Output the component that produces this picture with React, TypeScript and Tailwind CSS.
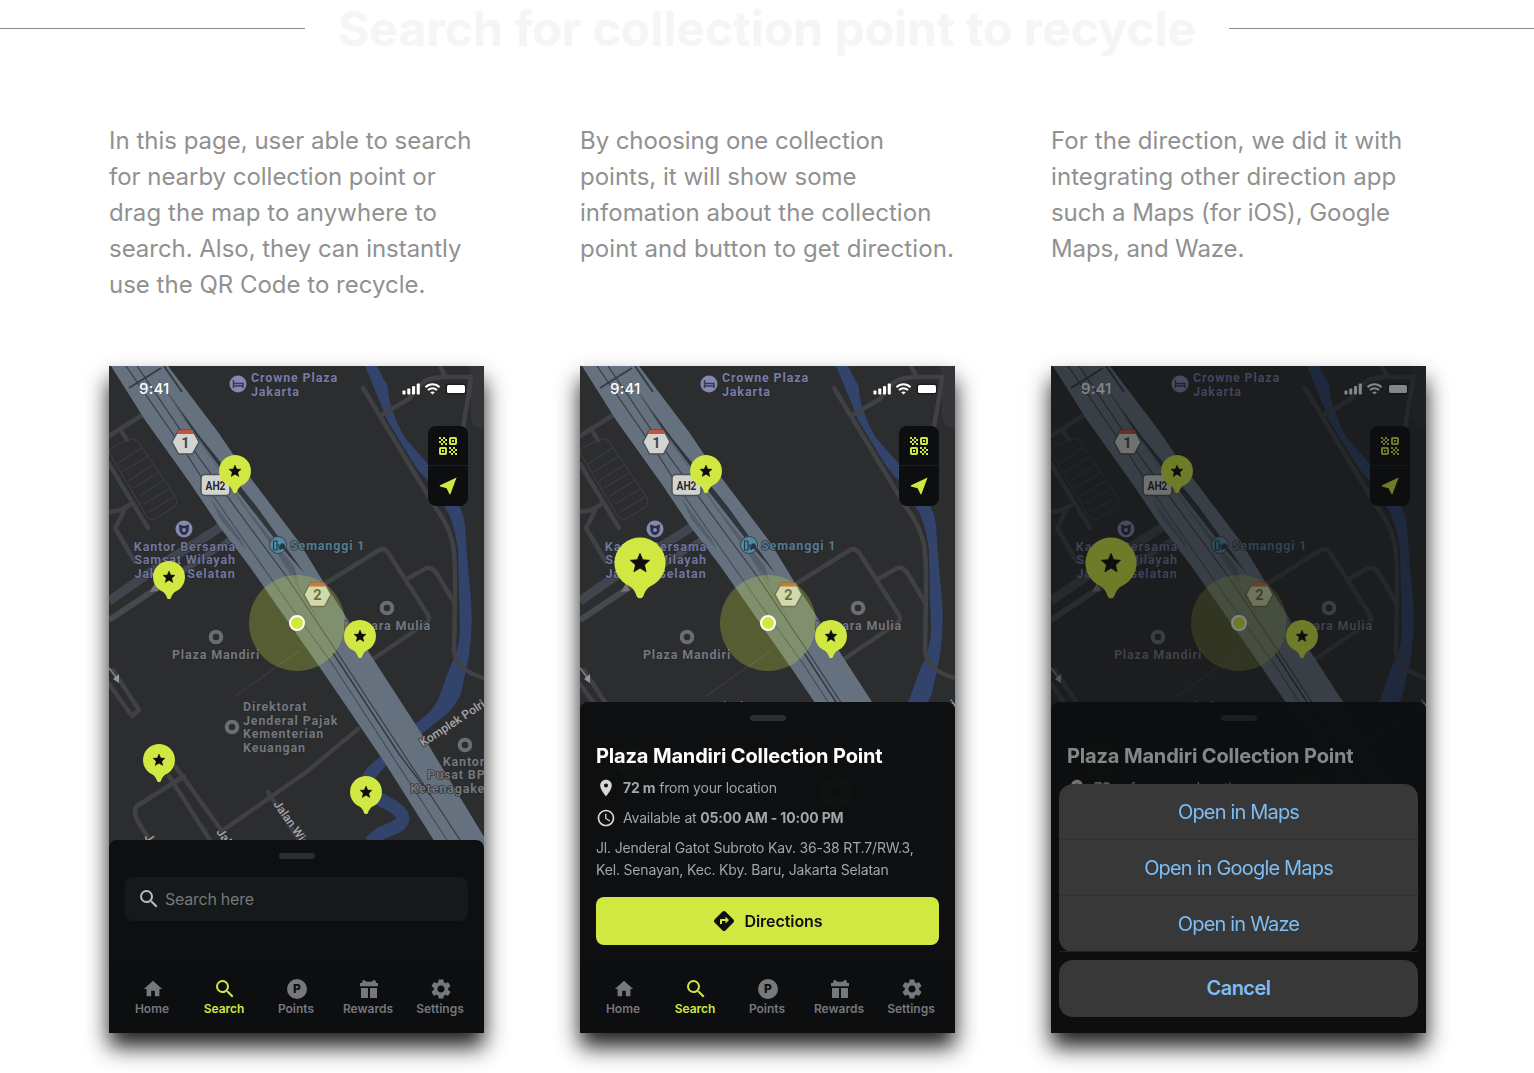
import React from "react";
import { MdHome, MdSearch, MdSettings, MdLocationOn, MdAccessTime, MdDirections } from "react-icons/md";

const STAR = "M0 -6 L1.7 -2 L6 -1.7 L2.8 1.2 L3.8 5.5 L0 3.2 L-3.8 5.5 L-2.8 1.2 L-6 -1.7 L-1.7 -2 Z";

function Pin({ x, y, scale = 1 }: { x: number; y: number; scale?: number }) {
  return (
    <g transform={`translate(${x} ${y}) scale(${scale})`}>
      <path
        d="M0 -16 A16 16 0 0 1 6.5 14.6 C4.6 15.6 3 18 2.1 20.6 C1.5 22.6 -1.5 22.6 -2.1 20.6 C-3 18 -4.6 15.6 -6.5 14.6 A16 16 0 0 1 0 -16 Z"
        fill="#d1e842"
      />
      <path d={STAR} fill="#0c0e10" stroke="#0c0e10" strokeWidth="0.5" strokeLinejoin="round" />
    </g>
  );
}

function Label({ x, y, lines, fill, anchor = "start" }: { x: number; y: number; lines: string[]; fill: string; anchor?: "start" | "middle" }) {
  return (
    <text x={x} y={y} fill={fill} textAnchor={anchor} fontSize="12.5" fontWeight="700" letterSpacing="0.85" stroke="#232529" strokeWidth="1.2" paintOrder="stroke">
      {lines.map((line, i) => (
        <tspan key={line} x={x} y={y + i * 13.4}>
          {line}
        </tspan>
      ))}
    </text>
  );
}

function Poi({ x, y }: { x: number; y: number }) {
  return <circle cx={x} cy={y} r="5.3" fill="#2c2d30" stroke="#6b6d73" strokeWidth="4" />;
}

function Shield({ x, y, text }: { x: number; y: number; text: string }) {
  return (
    <g transform={`translate(${x} ${y})`}>
      <path d="M-7 -12 H7 L13.500 0 L7 12 H-7 L-13.500 0 Z" fill="#d3d4cf" stroke="#4b4f55" strokeWidth="1.4" strokeLinejoin="round" />
      <path d="M-6.6 -12 H6.6 L8.8 -8 H-8.8 Z" fill="#c0553f" />
      <text y="5.500" fontSize="14.500" fontWeight="700" textAnchor="middle" fill="#45474b">
        {text}
      </text>
    </g>
  );
}

function CityMap({ selected }: { selected: boolean }) {
  return (
    <svg className="absolute inset-0" width="375" height="600" viewBox="0 0 375 600" fill="none" fontFamily="Roboto, sans-serif">
      <rect width="375" height="600" fill="#2c2d2f" />
      <path d="M361 0 H375 V62 Q362 63 362 48 Z" fill="#34353a" />

      {/* canal */}
      <path
        d="M256 0 L268 0 L275 14 Q279 18 279 24 Q280 36 284 46 Q288 58 296 72 L319 98 L345 132 Q355 145 356 160 L358 190 L362 235 Q364 262 360 290 L352 327 Q349 336 339 347 L310 370 L290 385 L266 412 L253 410 Q258 400 270 392 L303 360 Q322 348 329 334 L341 301 Q350 285 351 265 L349 185 Q347 165 340 148 L332 135 L319 115 Q308 104 300 90 L283 62 Q276 52 272 38 L266 24 Z"
        fill="#33446c"
      />
      <path d="M268 432 C285 440 294 446 294 453 C292 464 270 463 262 476" stroke="#33446c" strokeWidth="13" />

      {/* minor streets */}
      <g stroke="#404145" strokeWidth="4.5" strokeLinejoin="round" strokeLinecap="round">
        <path d="M254 22 L326 141 C348 170 346 188 346 230 L345 284 Q346 304 375 312" />
        <path d="M274 48 L300 33 C312 14 318 11 340 11 H362 C360 30 357 42 354 62" />
        <path d="M331 0 L336 10" />
        <path d="M214 219 L270 184 Q276 181 280 188 L319 249 Q322 254 316 258 L261 295" />
        <path d="M298 213 L314 204 Q322 198 328 208 L346 238" />
        <path d="M0 70 L38 46 M13 66 L18 74" />
        <path d="M0 98 L39 162 M0 146 L12 144 L22 138 M16 142 Q12 152 6 162 L26 196" />
        <path d="M0 318 L23 350 L30 344 L4 304" />
        <path d="M60 410 L108 485 M66 400 L113 465 L196 407 L249 363" />
        <path d="M75 410 L28 440 Q24 445 28 454 L44 480" />
        <path d="M159 426 L190 474" />
      </g>
      <g stroke="#3b3c41" strokeWidth="1.2">
        <path d="M2 90 Q-2 84 4 81 L20 73 Q26 72 30 77 L66 130 Q70 138 64 142 L46 153 Q41 155 37 149 Z" />
        <path d="M8 98 L32 82 M13 106 L38 91 M19 115 L44 99 M24 122 L49 107 M30 130 L54 115 M35 138 L60 123 M40 146 L65 131" />
        <path d="M125 331 L190 285" />
      </g>
      <path d="M0 235 L50 200 L115 159" stroke="#41464e" strokeWidth="9" />
      <path d="M0 254 L60 214 L121 174" stroke="#444950" strokeWidth="6" />
      <path d="M41 226 L46 217 L50 225 Z" fill="#70747a" />
      <path d="M0 302 L9 314" stroke="#7c7f84" strokeWidth="1.6" />
      <path d="M10 317 L4 313 L10 308 Z" fill="#94979b" />

      {/* toll highway */}
      <path
        d="M2 0 L59 0 L109 66 L128 94 L190 176 L212 212 L261 288 L314 370 L383 484 H331 L274 394 L214 306 L141 201 L110 160 L81 117 L36 54 Z"
        fill="#65717e"
      />
      <path d="M17 0 L77 87 L103 128 M28 0 L91 93 L140 160 L177 210 L224 280 L351 474" stroke="#373d45" strokeWidth="1.2" />
      <path d="M103 128 L123 157 L177 234 L224 299 L338 474" stroke="#454c55" strokeWidth="1.2" />
      <path d="M50 14 L84 66 L120 118 L168 186 L207 250" stroke="#525c67" strokeWidth="1" />
      <path d="M55 20 L70 42 L92 72 L148 141 L196 208 L172 181 L126 122 L82 62 Z" fill="#30353c" />
      <path d="M20 22 L52 2 M55 0 L73 26" stroke="#363c43" strokeWidth="2" />
      <path d="M101 132 L131 172 L137 184 L112 154 Z M128 131 L185 200 L190 218 Z" fill="#535e6a" />
      <path d="M224 287 L290 388 L321 429" stroke="#303840" strokeWidth="1.4" />

      {/* place labels */}
      <g>
        <circle cx="129" cy="18" r="8.5" fill="#8588b0" />
        <path d="M124.5 14 V22 M124.5 20 H134 V17.5 H124.5 M134 17 V22" stroke="#37395a" strokeWidth="1.5" />
        <Label x={142} y={16.2} lines={["Crowne Plaza", "Jakarta"]} fill="#787da6" />
        <circle cx="75" cy="163" r="8.5" fill="#8588b0" />
        <path d="M70 158.500 L75 160 L80 158.500 L79.5 165 Q78 169 75 169 Q72 169 70.5 165 Z" fill="#2c2e48" />
        <circle cx="75" cy="164" r="2" fill="#8588b0" />
        <Label x={76} y={185} lines={["Kantor Bersama", "Samsat Wilayah", "Jakarta Selatan"]} fill="#71769c" anchor="middle" />
        <circle cx="169" cy="179" r="8.5" fill="#528aa0" stroke="#36424d" strokeWidth="1" />
        <path d="M164.5 184 V175 H168 V184 Z M168 179 H170 V183" stroke="#22384a" strokeWidth="1.1" />
        <path d="M170.5 184 V180.500 L172 177.500 H175 L176.300 180.500 V184 H174.800 V183 H172 V184 Z" fill="#22384a" />
        <Label x={181} y={184} lines={["Semanggi 1"]} fill="#547b91" />
        <Poi x={278} y={242} />
        <Label x={278.500} y={264} lines={["Menara Mulia"]} fill="#74777e" anchor="middle" />
        <Poi x={107} y={271} />
        <Label x={107} y={293} lines={["Plaza Mandiri"]} fill="#74777e" anchor="middle" />
        <Poi x={123} y={361} />
        <Label x={134} y={345.3} lines={["Direktorat", "Jenderal Pajak", "Kementerian", "Keuangan"]} fill="#74777e" />
        <Poi x={356} y={379} />
        <Label x={355} y={399.700} lines={["Kantor", "Pusat BPJS", "Ketenagakerjaan"]} fill="#74777e" anchor="middle" />
      </g>
      <g fill="#a4a6aa" fontSize="12" fontWeight="500" stroke="#2c2d30" strokeWidth="1.5" paintOrder="stroke">
        <text transform="translate(314 381) rotate(-33)">Komplek Polri</text>
        <text transform="translate(164 438) rotate(55)">Jalan Widya</text>
        <text transform="translate(107 466) rotate(55)">Jalan</text>
        <text transform="translate(35 471) rotate(55)">Jalan</text>
      </g>

      <Shield x={76.500} y={76} text="1" />
      <g transform="translate(106 119)">
        <rect x="-14" y="-10.5" width="29" height="21" rx="4" fill="#d3d4cf" stroke="#4b4f55" strokeWidth="1.5" />
        <text x="0.5" y="4.700" textAnchor="middle" fontSize="13.500" fontWeight="700" textLength="20" lengthAdjust="spacingAndGlyphs" fill="#25272a">
          AH2
        </text>
      </g>
      <Shield x={208.500} y={228.500} text="2" />

      {/* user position */}
      <circle cx="188" cy="257" r="48" fill="#d1e842" fillOpacity="0.26" />
      <circle cx="188" cy="257" r="7" fill="#d1e842" stroke="#fff" strokeWidth="2" />

      <Pin x={126} y={105} />
      {selected ? <Pin x={60} y={197} scale={1.6} /> : <Pin x={60} y={211} />}
      <Pin x={251} y={270} />
      <Pin x={50} y={394} />
      <Pin x={257} y={426} />
    </svg>
  );
}

function StatusBar() {
  return (
    <div className="relative flex h-[46px] items-center justify-between pr-[18px] pl-[30px] text-white">
      <span className="text-[15px] leading-5 font-medium tracking-[0.2px]">9:41</span>
      <svg width="64" height="14" viewBox="0 0 64 14" fill="#fff">
        <rect x="0.500" y="8.500" width="3" height="4" rx="0.8" />
        <rect x="5.300" y="6.500" width="3" height="6" rx="0.8" />
        <rect x="10" y="4" width="3" height="8.500" rx="0.8" />
        <rect x="14.800" y="1.500" width="3" height="11" rx="0.8" />
        <g fill="none" stroke="#fff" strokeWidth="2">
          <path d="M23.500 5.200 C27.500 1.200 33.500 1.200 37.500 5.200" />
          <path d="M26 8.100 C28.500 5.700 32.500 5.700 35 8.100" />
        </g>
        <path d="M28.200 10.300 Q30.500 8.500 32.800 10.300 L30.500 12.600 Z" />
        <rect x="43.500" y="1.500" width="20.500" height="11" rx="3" fill="#1b1c1f" />
        <rect x="45" y="3" width="18" height="8" rx="1.600" />
      </svg>
    </div>
  );
}

function QrIcon() {
  const cells = [
    [0, 0], [2, 0], [1, 1], [3, 1], [0, 2], [2, 2], [1, 3], [3, 3],
  ];
  return (
    <svg width="18" height="18" viewBox="0 0 18 18" fill="#d1e842">
      {cells.map(([x, y]) => (
        <React.Fragment key={`${x}-${y}`}>
          <rect x={x * 2} y={y * 2} width="2" height="2" />
          <rect x={10 + x * 2} y={10 + y * 2} width="2" height="2" />
        </React.Fragment>
      ))}
      <rect x="11" y="1" width="6" height="6" rx="0.700" fill="none" stroke="#d1e842" strokeWidth="2" />
      <rect x="13" y="3" width="2" height="2" />
      <rect x="1" y="11" width="6" height="6" rx="0.700" fill="none" stroke="#d1e842" strokeWidth="2" />
      <rect x="3" y="13" width="2" height="2" />
    </svg>
  );
}

function MapTools() {
  return (
    <div className="absolute top-[60px] right-4 flex h-20 w-10 flex-col divide-y divide-[#1d2021] rounded-lg bg-[#0c0e10]">
      <button className="flex h-10 items-center justify-center" aria-label="Scan code">
        <QrIcon />
      </button>
      <button className="flex h-10 items-center justify-center" aria-label="Locate me">
        <svg width="18" height="18" viewBox="0 0 18 18">
          <path d="M17.600 0.600 L11.500 17 Q11 17.900 10.400 17 L7.600 11.200 L1.100 9.400 Q0.200 8.900 1.100 8.300 Z" fill="#d1e842" />
        </svg>
      </button>
    </div>
  );
}

function PointsIcon() {
  return (
    <span className="flex size-5 items-center justify-center rounded-full bg-current">
      <span className="text-xs leading-none font-extrabold text-[#0c0e10]">P</span>
    </span>
  );
}

function GiftIcon() {
  return (
    <svg width="18" height="18" viewBox="0 0 18 18" fill="currentColor">
      <path d="M0 3 H2 L2.600 0.600 Q3.200 -0.500 4.500 0.300 L6.500 1.700 H11.500 L13.500 0.300 Q14.800 -0.500 15.400 0.600 L16 3 H18 V6.300 H0 Z" />
      <path d="M1 8 H8 V18 H1 Z M10 8 H17 V18 H10 Z" />
    </svg>
  );
}

const TABS = [
  { name: "Home", icon: <MdHome size={22} /> },
  { name: "Search", icon: <MdSearch size={24} /> },
  { name: "Points", icon: <PointsIcon /> },
  { name: "Rewards", icon: <GiftIcon /> },
  { name: "Settings", icon: <MdSettings size={24} /> },
];

function TabBar() {
  return (
    <nav className="flex h-[69px] bg-[#0c0e10] pt-[13px] pl-[7px]">
      {TABS.map((tab) => (
        <div key={tab.name} className={tab.name === "Search" ? "flex w-[72px] flex-col items-center text-[#d1e842]" : "flex w-[72px] flex-col items-center text-[#76787c]"}>
          <span className="flex h-6 items-center justify-center pl-[2px]">{tab.icon}</span>
          <span className="text-xs leading-4 font-semibold">{tab.name}</span>
        </div>
      ))}
    </nav>
  );
}

function Grabber() {
  return <div className="mx-auto h-[6px] w-9 shrink-0 rounded-full bg-[#2b2d2f]" />;
}

function SearchSheet() {
  return (
    <div className="flex h-[124px] flex-col rounded-t-lg bg-[#0c0e10]/98 px-4 pt-[13px] backdrop-blur-[2px]">
      <Grabber />
      <div className="mt-[18px] flex h-11 items-center rounded-lg bg-[#15191a] pl-3">
        <MdSearch size={24} color="#b9bbbd" />
        <span className="ml-1 text-base tracking-[-0.25px] text-[#75787c]">Search here</span>
      </div>
    </div>
  );
}

function DetailSheet({ compact }: { compact: boolean }) {
  return (
    <div className={compact ? "flex h-[331px] flex-col rounded-t-lg bg-[#0c0e10]/98 px-4 pt-[13px] text-sm tracking-[-0.17px] text-[#a3a5a8] backdrop-blur-[2px]" : "flex h-[262px] flex-col rounded-t-lg bg-[#0c0e10]/98 px-4 pt-[13px] text-sm tracking-[-0.17px] text-[#a3a5a8] backdrop-blur-[2px]"}>
      <Grabber />
      <h2 className="mt-[21px] text-xl leading-7 font-bold tracking-[-0.15px] text-white">Plaza Mandiri Collection Point</h2>
      <div className="mt-[8px] flex h-5 items-center">
        <MdLocationOn size={20} color="#d7d8d3" />
        <span className="ml-[7px]">
          <b className="font-bold">72 m</b> from your location
        </span>
      </div>
      {!compact && (
        <>
          <div className="mt-[10px] flex h-5 items-center">
            <MdAccessTime size={20} color="#d7d8d3" />
            <span className="ml-[7px]">
              Available at <b className="font-bold">05:00 AM - 10:00 PM</b>
            </span>
          </div>
          <p className="mt-[9px] leading-[22px]">
            Jl. Jenderal Gatot Subroto Kav. 36-38 RT.7/RW.3,
            <br />
            Kel. Senayan, Kec. Kby. Baru, Jakarta Selatan
          </p>
          <button className="mt-4 flex h-12 shrink-0 items-center justify-center gap-2 rounded-lg bg-[#d1e842] text-base font-semibold tracking-[-0.05px] text-[#0c0e10]">
            <MdDirections size={24} />
            Directions
          </button>
        </>
      )}
    </div>
  );
}

function ActionSheet() {
  return (
    <div className="absolute inset-0 flex flex-col justify-end bg-[#0c0d0f]/50 px-2 pb-4 text-xl text-[#7dbdf3]">
      <div className="flex flex-col overflow-hidden rounded-[14px] bg-[#383838] tracking-[-0.82px]">
        <button className="h-14 border-b border-[#2f3031]">Open in Maps</button>
        <button className="h-14 border-b border-[#2f3031]">Open in Google Maps</button>
        <button className="h-14">Open in Waze</button>
      </div>
      <div className="-mt-px h-px bg-[#222324]" />
      <button className="mt-2 h-[57px] rounded-[14px] bg-[#383838] pb-0.5 font-semibold tracking-[-0.5px]">Cancel</button>
    </div>
  );
}

type Kind = "search" | "detail" | "actions";

function Phone({ kind }: { kind: Kind }) {
  return (
    <div className="relative flex h-[667px] w-[375px] flex-col bg-[#0c0e10] shadow-[0_14px_21px_rgba(0,0,0,0.88)]">
      <CityMap selected={kind !== "search"} />
      <StatusBar />
      <MapTools />
      <div className="relative mt-auto">
        {kind === "search" ? <SearchSheet /> : <DetailSheet compact={kind === "actions"} />}
        {kind !== "actions" && <TabBar />}
      </div>
      {kind === "actions" && <ActionSheet />}
    </div>
  );
}

const COLUMNS: { kind: Kind; lines: { text: string; tracking?: string }[] }[] = [
  {
    kind: "search",
    lines: [
      { text: "In this page, user able to search" },
      { text: "for nearby collection point or", tracking: "tracking-[-0.03px]" },
      { text: "drag the map to anywhere to", tracking: "tracking-[0.07px]" },
      { text: "search. Also, they can instantly", tracking: "tracking-[-0.03px]" },
      { text: "use the QR Code to recycle." },
    ],
  },
  {
    kind: "detail",
    lines: [
      { text: "By choosing one collection", tracking: "tracking-[-0.07px]" },
      { text: "points, it will show some" },
      { text: "infomation about the collection", tracking: "tracking-[0.05px]" },
      { text: "point and button to get direction.", tracking: "tracking-[0.12px]" },
    ],
  },
  {
    kind: "actions",
    lines: [
      { text: "For the direction, we did it with", tracking: "tracking-[0.08px]" },
      { text: "integrating other direction app", tracking: "tracking-[0.07px]" },
      { text: "such a Maps (for iOS), Google", tracking: "tracking-[-0.08px]" },
      { text: "Maps, and Waze.", tracking: "tracking-[-0.12px]" },
    ],
  },
];

export default function App() {
  return (
    <main className="h-[1073px] w-[1534px] overflow-hidden bg-white font-['Inter',sans-serif]">
      <header className="flex h-[58px] items-center justify-between">
        <span className="mb-0.5 h-px w-[305px] bg-[#8b8b8b]" />
        <h1 className="text-5xl leading-[58px] font-bold whitespace-nowrap text-[#f4f5f7]">Search for collection point to recycle</h1>
        <span className="mb-0.5 h-px w-[305px] bg-[#8b8b8b]" />
      </header>
      <section className="mt-[65px] flex gap-24 pl-[109px]">
        {COLUMNS.map((column) => (
          <article key={column.kind} className="w-[375px]">
            <p className="h-[243px] text-2xl leading-9 whitespace-nowrap text-[#919191]">
              {column.lines.map((line) => (
                <span key={line.text} className={`block ${line.tracking ?? ""}`}>
                  {line.text}
                </span>
              ))}
            </p>
            <Phone kind={column.kind} />
          </article>
        ))}
      </section>
    </main>
  );
}
